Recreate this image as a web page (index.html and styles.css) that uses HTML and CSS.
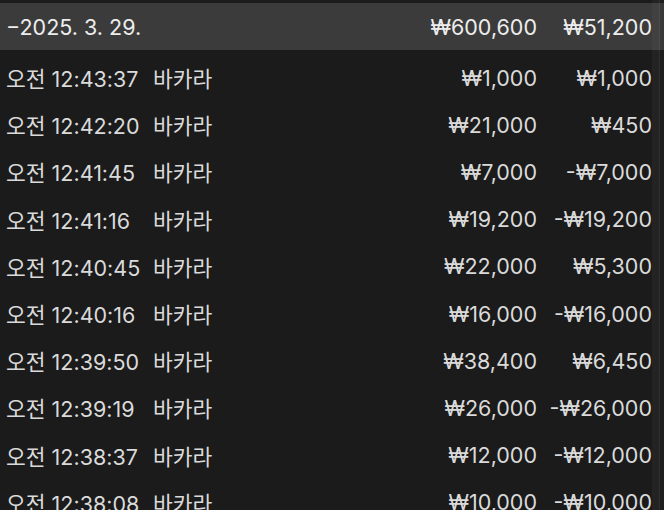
FILE: index.html
```html
<!DOCTYPE html>
<html lang="ko">
<head>
<meta charset="utf-8">
<link rel="stylesheet" href="styles.css">
</head>
<body>
<div class="screen">
  <div class="list">
    <div class="row head">
      <span class="time">−2025. 3. 29.</span>
      <span class="game"></span>
      <span class="amt">₩600,600</span>
      <span class="amt">₩51,200</span>
    </div>
    <div class="row"><span class="time">오전 12:43:37</span><span class="game">바카라</span><span class="amt">₩1,000</span><span class="amt">₩1,000</span></div>
    <div class="row"><span class="time">오전 12:42:20</span><span class="game">바카라</span><span class="amt">₩21,000</span><span class="amt">₩450</span></div>
    <div class="row"><span class="time">오전 12:41:45</span><span class="game">바카라</span><span class="amt">₩7,000</span><span class="amt">-₩7,000</span></div>
    <div class="row"><span class="time">오전 12:41:16</span><span class="game">바카라</span><span class="amt">₩19,200</span><span class="amt">-₩19,200</span></div>
    <div class="row"><span class="time">오전 12:40:45</span><span class="game">바카라</span><span class="amt">₩22,000</span><span class="amt">₩5,300</span></div>
    <div class="row"><span class="time">오전 12:40:16</span><span class="game">바카라</span><span class="amt">₩16,000</span><span class="amt">-₩16,000</span></div>
    <div class="row"><span class="time">오전 12:39:50</span><span class="game">바카라</span><span class="amt">₩38,400</span><span class="amt">₩6,450</span></div>
    <div class="row"><span class="time">오전 12:39:19</span><span class="game">바카라</span><span class="amt">₩26,000</span><span class="amt">-₩26,000</span></div>
    <div class="row"><span class="time">오전 12:38:37</span><span class="game">바카라</span><span class="amt">₩12,000</span><span class="amt">-₩12,000</span></div>
    <div class="row"><span class="time">오전 12:38:08</span><span class="game">바카라</span><span class="amt">₩10,000</span><span class="amt">-₩10,000</span></div>
  </div>
  <div class="scrollbar"></div>
</div>
</body>
</html>
```
FILE: styles.css
```css
html, body {
  margin: 0;
  padding: 0;
  background: #1b1b1b;
  overflow: hidden;
}
.screen {
  position: relative;
  width: 664px;
  height: 510px;
  overflow: hidden;
  font-family: Inter, "Noto Sans CJK KR", sans-serif;
  font-size: 21.5px;
  color: #dadada;
  background: #1b1b1b;
}
.list {
  padding-top: 3px;
}
.row {
  display: grid;
  grid-template-columns: 147px 1fr auto 115px;
  align-items: center;
  height: 47.2px;
  padding-left: 6px;
  padding-right: 12px;
  padding-top: 8px;
  box-sizing: border-box;
  white-space: nowrap;
}
.row.head {
  background: #3b3b3b;
  color: #ededed;
  height: 47px;
  padding-top: 1px;
}
.amt {
  text-align: right;
}
.scrollbar {
  position: absolute;
  top: 0;
  right: 0;
  bottom: 0;
  width: 12px;
  box-sizing: border-box;
  background: rgba(255, 255, 255, 0.035);
  border-right: 4px solid rgba(0, 0, 0, 0.12);
  box-shadow: inset -1px 0 0 rgba(255, 255, 255, 0.06);
}
```
